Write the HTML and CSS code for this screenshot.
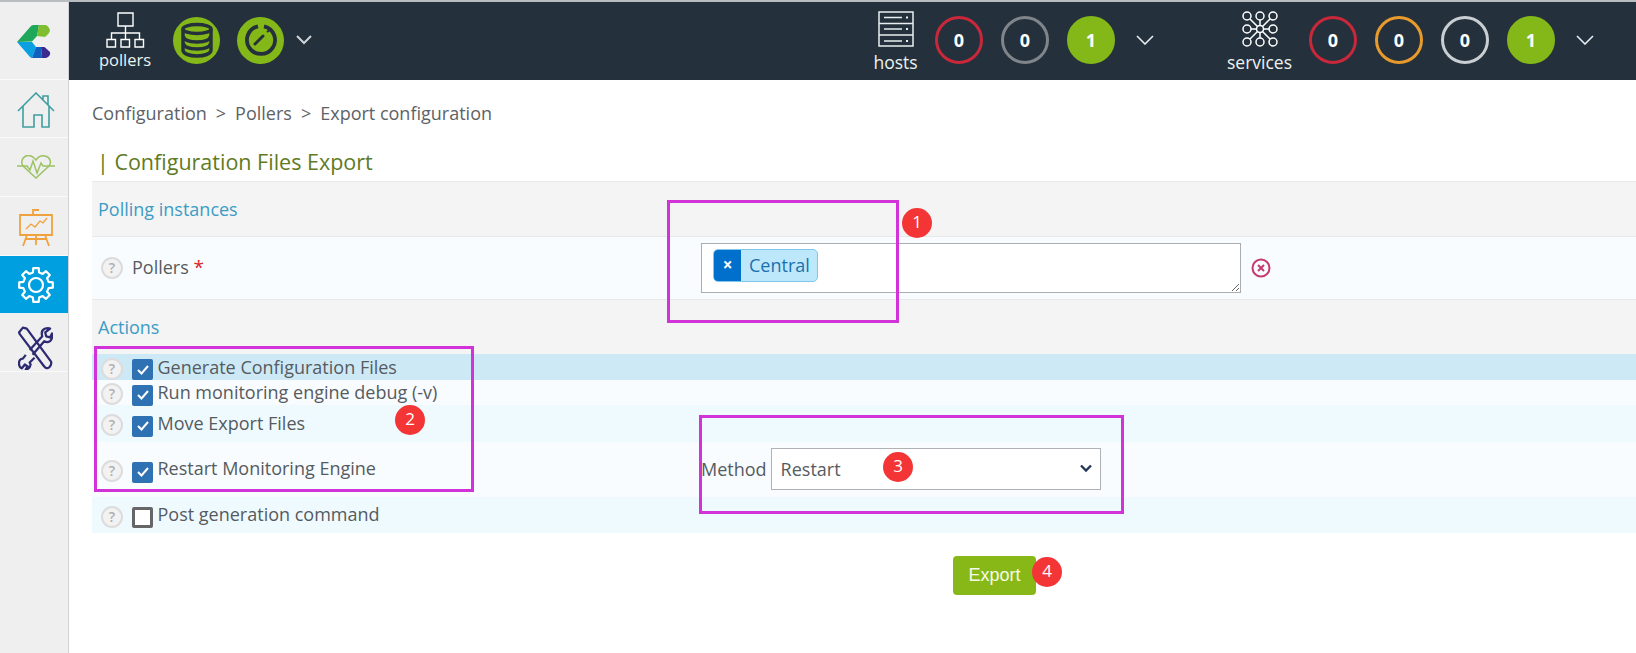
FILE: index.html
```html
<!DOCTYPE html>
<html lang="en">
<head>
<meta charset="utf-8">
<title>Configuration Files Export</title>
<link rel="stylesheet" href="styles.css">
</head>
<body>
<div class="app">
  <nav class="sidebar">
    <div class="side-item side-logo">
      <svg width="34" height="33" viewBox="0 0 34 33">
        <path fill="#1fa85a" d="M0 17 14 1Q15 0 17 0H22L20 11 15 16.5Z"/>
        <path fill="#7fbf2f" d="M22 0H28Q31 0 33 5 33 8 28 12L20 11Z"/>
        <path fill="#0a9fe0" d="M0 17H15L19 22 15 33Q14 33 13 32Z"/>
        <path fill="#1060c0" d="M15 33 19 22H24L25 33Z"/>
        <path fill="#3a2a90" d="M24 22H27.500L33 27Q34 31 29 33H25Z"/>
      </svg>
    </div>
    <div class="side-item side-home">
      <svg width="38" height="36" viewBox="0 0 38 36" fill="none" stroke="#3f9fa0" stroke-width="1.6">
        <path d="M1 19 19 1 37 19M6 14V35H17V23H25V35H32V14M26 8V4H31V13"/>
      </svg>
    </div>
    <div class="side-item side-short">
      <svg width="38" height="24" viewBox="0 0 38 24" fill="none" stroke="#9cc264" stroke-width="1.5">
        <path d="M0 11H10L13 15 16 6 20 18 24 8 26 11H38"/>
        <path d="M6 11C2 4 9-1 14 1 16 2 18 3 19 5 21 2 24 0 28 1 33 2 35 7 32 11L19 23Z"/>
      </svg>
    </div>
    <div class="side-item side-chart">
      <svg width="34" height="38" viewBox="0 0 34 38" fill="none" stroke="#f0a23e" stroke-width="1.8">
        <path d="M1 6H33V26H1ZM14 6V1H20M8 26 4 37M26 26 30 37M17 26V36M6 30H28"/>
        <path stroke-width="1.3" d="M7 20 12 15 16 18 21 12 24 14 28 9"/>
      </svg>
    </div>
    <div class="side-item side-active">
      <svg width="38" height="38" viewBox="-19 -19 38 38" fill="none" stroke="#fff" stroke-width="2.200" stroke-linejoin="round">
        <path d="M12.600-3.100 16.800-2.700V2.700L12.600 3.100 11.100 6.700 13.800 10 10 13.800 6.700 11.100 3.100 12.600 2.700 16.800H-2.700L-3.100 12.600-6.700 11.100-10 13.800-13.800 10-11.100 6.700-12.600 3.100-16.800 2.700V-2.700L-12.600-3.100-11.100-6.700-13.800-10-10-13.800-6.700-11.100-3.100-12.600-2.700-16.800H2.700L3.100-12.600 6.700-11.100 10-13.800 13.800-10 11.100-6.700Z"/>
        <circle r="7"/>
      </svg>
    </div>
    <div class="side-item side-tools">
      <svg width="35" height="44" viewBox="0 0 36 44" fill="none" stroke="#2d2a72" stroke-width="2.300" stroke-linejoin="round">
        <path d="M1 6 5 1 9 2 34 36Q35 39 32 42 29 44 27 41L2 8Z"/>
        <path d="M12 24 25 10Q23 4 28 2 31 1 33 2L28 6 29 10 33 11 35 7Q36 12 33 15 30 17 27 15L15 29M8 29 5 33Q1 33 1 38 1 42 4 43L7 39 10 41 8 44Q12 44 13 39L12 37 17 32"/>
      </svg>
    </div>
  </nav>

  <div class="content">
    <header class="topbar">
      <div class="stat-label stat-pollers">
        <svg width="40" height="36" viewBox="0 0 40 36" fill="none" stroke="#fff" stroke-width="1.4">
          <path d="M13 1H28V14H13ZM20.500 14V28M6.500 27V21H34.500V27M2 27.500H10.500V35H2ZM16 27.500H24.500V35H16ZM30 27.500H38.500V35H30Z"/>
        </svg>
        <span>pollers</span>
      </div>
      <div class="disc disc-db">
        <svg width="46" height="46" viewBox="0 0 46 46" fill="none" stroke="#24303b" stroke-width="3.500">
          <ellipse cx="23" cy="12" rx="14" ry="4.500"/>
          <path d="M9 12V33C9 37 16 39 23 39S37 37 37 33V12M9 19C10 23 16 25 23 25S36 23 37 19M9 26C10 30 16 32 23 32S36 30 37 26"/>
        </svg>
      </div>
      <div class="disc disc-gauge">
        <svg width="46" height="46" viewBox="0 0 46 46" fill="none" stroke="#24303b">
          <path stroke-width="3.800" d="M26 9.300A14 14 0 1 1 20 9.300"/>
          <path stroke-width="3" d="M17 27 25 19" stroke-linecap="round"/>
          <path stroke-width="2" d="M29 15 33 12"/>
        </svg>
      </div>
      <svg class="chev chev-first" width="20" height="10" viewBox="0 0 20 10" fill="none" stroke="#cfd4d8" stroke-width="2"><path d="M3 1 10 8 17 1"/></svg>

      <div class="stat-label stat-hosts">
        <svg width="36" height="36" viewBox="0 0 36 36" fill="none" stroke="#e8eef0" stroke-width="1.500">
          <path d="M1 1H35V35H1ZM1 12.500H35M1 24H35M6 6.500H24M6 18H24M6 30H24"/>
          <path stroke-width="2" d="M29 5.500V7.500M29 17V19M29 29V31"/>
        </svg>
        <span>hosts</span>
      </div>
      <div class="rings">
        <div class="ring ring-red">0</div>
        <div class="ring ring-gray">0</div>
        <div class="ring ring-ok">1</div>
      </div>
      <svg class="chev" width="20" height="10" viewBox="0 0 20 10" fill="none" stroke="#e8eef0" stroke-width="1.600"><path d="M2 1 10 9 18 1"/></svg>

      <div class="stat-label stat-services">
        <svg width="36" height="36" viewBox="0 0 36 36" fill="none" stroke="#fff" stroke-width="1.500">
          <circle cx="5" cy="5" r="4"/><circle cx="18" cy="5" r="4"/><circle cx="31" cy="5" r="4"/>
          <circle cx="5" cy="18" r="4"/><circle cx="18" cy="18" r="3.500"/><circle cx="31" cy="18" r="4"/>
          <circle cx="5" cy="31" r="4"/><circle cx="18" cy="31" r="4"/><circle cx="31" cy="31" r="4"/>
          <path d="M8 8 15.500 15.500M28 8 20.500 15.500M8 28 15.500 20.500M28 28 20.500 20.500M18 9V14.500M18 21.500V27M9 18H14.500M21.500 18H27"/>
        </svg>
        <span>services</span>
      </div>
      <div class="rings">
        <div class="ring ring-red">0</div>
        <div class="ring ring-orange">0</div>
        <div class="ring ring-light">0</div>
        <div class="ring ring-ok">1</div>
      </div>
      <svg class="chev" width="20" height="10" viewBox="0 0 20 10" fill="none" stroke="#e8eef0" stroke-width="1.600"><path d="M2 1 10 9 18 1"/></svg>
    </header>

    <main class="main">
      <div class="crumbs"><span>Configuration</span><span>&gt;</span><span>Pollers</span><span>&gt;</span><span>Export configuration</span></div>
      <h1 class="title">| Configuration Files Export</h1>

      <div class="section section-polling">Polling instances</div>
      <div class="row row-pollers">
        <div class="cell-label">
          <span class="help">?</span>
          <span class="pollers-label">Pollers <em>*</em></span>
        </div>
        <div class="cell-field">
          <div class="multi">
            <span class="tag"><span class="tag-x">×</span><span class="tag-text">Central</span></span>
          </div>
          <svg class="clear" width="20" height="20" viewBox="0 0 20 20" fill="none" stroke="#c43a6c" stroke-width="2"><circle cx="10" cy="10" r="8.500"/><path d="M7 7 13 13M13 7 7 13"/></svg>
        </div>
      </div>
      <div class="section section-actions">Actions</div>

      <div class="row row-generate">
        <div class="cell-label"><span class="help">?</span><span class="check on"><svg width="14" height="12" viewBox="0 0 14 12" fill="none" stroke="#fff" stroke-width="2"><path d="M2 6 5.500 9.500 12 2"/></svg></span><span class="opt">Generate Configuration Files</span></div>
      </div>
      <div class="row row-debug">
        <div class="cell-label"><span class="help">?</span><span class="check on"><svg width="14" height="12" viewBox="0 0 14 12" fill="none" stroke="#fff" stroke-width="2"><path d="M2 6 5.500 9.500 12 2"/></svg></span><span class="opt">Run monitoring engine debug (-v)</span></div>
      </div>
      <div class="row row-move">
        <div class="cell-label"><span class="help">?</span><span class="check on"><svg width="14" height="12" viewBox="0 0 14 12" fill="none" stroke="#fff" stroke-width="2"><path d="M2 6 5.500 9.500 12 2"/></svg></span><span class="opt">Move Export Files</span></div>
      </div>
      <div class="row row-restart">
        <div class="cell-label"><span class="help">?</span><span class="check on"><svg width="14" height="12" viewBox="0 0 14 12" fill="none" stroke="#fff" stroke-width="2"><path d="M2 6 5.500 9.500 12 2"/></svg></span><span class="opt">Restart Monitoring Engine</span></div>
        <div class="cell-field">
          <span class="method-label">Method</span>
          <div class="select"><span>Restart</span><svg width="14" height="9" viewBox="0 0 14 9" fill="none" stroke="#26385a" stroke-width="2.400"><path d="M2 1.500 7 6.500 12 1.500"/></svg></div>
        </div>
      </div>
      <div class="row row-post">
        <div class="cell-label"><span class="help">?</span><span class="check off"></span><span class="opt">Post generation command</span></div>
      </div>

      <div class="actions"><button class="export" type="button">Export</button></div>
    </main>
  </div>
</div>

<div class="mark mark-1"></div>
<div class="mark mark-2"></div>
<div class="mark mark-3"></div>
<div class="num num-1">1</div>
<div class="num num-2">2</div>
<div class="num num-3">3</div>
<div class="num num-4">4</div>
</body>
</html>
```
FILE: styles.css
```css
* { box-sizing: border-box; }
html, body { margin: 0; height: 100%; }
body {
  position: relative;
  height: 653px;
  overflow: hidden;
  background: #fff;
  font-family: "Open Sans", sans-serif;
  font-size: 18px;
  color: #555b60;
  border-top: 2px solid #b9bdbf;
}
.app { display: flex; height: 651px; }

/* Sidebar */
.sidebar {
  width: 69px;
  flex: none;
  background: #efefef;
  border-right: 1px solid #d2d2d2;
}
.side-item {
  height: 58px;
  display: flex;
  align-items: center;
  justify-content: center;
  padding-left: 3px;
  border-bottom: 1px solid #fafafa;
}
.side-logo { height: 78px; padding: 1px 0 0; }
.side-home { padding-top: 2px; }
.side-short { height: 59px; }
.side-chart { height: 59px; padding-top: 4px; }
.side-tools { height: 59px; padding-top: 12px; }
.side-active { background: #009fdf; border-bottom: 0; height: 57px; }

/* Top bar */
.content { flex: 1; min-width: 0; display: flex; flex-direction: column; }
.topbar {
  height: 78px;
  flex: none;
  display: flex;
  align-items: center;
  padding: 0 41px 2px 30px;
  background: #24303b;
}
.stat-label {
  display: flex;
  flex-direction: column;
  align-items: center;
  color: #edf2f2;
  font-size: 17.500px;
  line-height: 20px;
  padding-top: 3px;
}
.stat-label span { margin-top: 5px; white-space: nowrap; }
.stat-pollers { width: 52px; font-size: 16.500px; padding-top: 2px; }
.stat-pollers span { margin-top: 2px; }
.stat-hosts { width: 45px; margin-left: auto; }
.stat-services { width: 65px; margin-left: 72px; }
.disc { width: 47px; height: 47px; border-radius: 50%; background: #84b819; display: flex; align-items: center; justify-content: center; }
.disc-db { margin-left: 22px; }
.disc-gauge { margin-left: 17px; }
.chev { flex: none; margin-left: 20px; }
.chev-first { margin-left: 10px; }
.rings { display: flex; gap: 18px; margin-left: 17px; }
.ring {
  width: 48px;
  height: 48px;
  border-radius: 50%;
  border: 3px solid #c8283a;
  display: flex;
  align-items: center;
  justify-content: center;
  color: #fff;
  font-weight: 700;
  font-size: 18px;
}
.ring-gray { border-color: #80858a; }
.ring-orange { border-color: #e89a2c; }
.ring-light { border-color: #c9ced2; }
.ring-ok { border-color: #84b819; background: #84b819; }

/* Main */
.main { flex: 1; padding-left: 23px; }
.crumbs { display: flex; gap: 9px; height: 57px; align-items: center; padding-top: 9px; font-size: 18px; color: #5d6266; }
.title {
  margin: 0;
  height: 44px;
  padding: 11px 0 0 5px;
  font-size: 21.500px;
  line-height: 28px;
  font-weight: 400;
  color: #5f7a1f;
}
.section {
  display: flex;
  align-items: center;
  padding-left: 6px;
  background: #f4f4f4;
  color: #3b9cc6;
  font-size: 18px;
  border-top: 1px solid #e6e8ea;
}
.section-polling { height: 55px; padding-bottom: 1px; }
.section-actions { height: 55px; }
.row { display: flex; align-items: center; }
.cell-label { width: 609px; flex: none; display: flex; align-items: center; padding-left: 9px; }
.cell-field { display: flex; align-items: center; }
.help {
  width: 22px;
  height: 22px;
  flex: none;
  margin-top: 3px;
  margin-right: 9px;
  border-radius: 50%;
  border: 2px solid #dcdcdc;
  background: #f2f2f2;
  color: #aeaeae;
  font-size: 14px;
  line-height: 18px;
  font-weight: 600;
  text-align: center;
}
.check {
  width: 21px;
  height: 21px;
  flex: none;
  margin-top: 5px;
  margin-right: 4.500px;
  border-radius: 2px;
  display: flex;
  align-items: center;
  justify-content: center;
}
.check.on { background: #2f72b4; }
.check.off { background: #fff; border: 3px solid #666; }
.opt { padding-bottom: 2px; white-space: nowrap; }
.row-generate .opt { padding-bottom: 0; }
.row-restart .opt { padding-bottom: 4px; }
.pollers-label { white-space: nowrap; }
.pollers-label em { font-style: normal; color: #d8232a; font-size: 19px; }

.row-pollers { height: 63px; background: #f8fcfe; border-top: 1px solid #e6e8ea; }
.row-pollers .cell-label { padding-bottom: 3px; }
.row-pollers .help { margin-right: 9px; }
.multi {
  width: 540px;
  height: 50px;
  padding: 5px 11px;
  background: #fff;
  border: 1px solid #a9aeb2;
  resize: both;
  overflow: hidden;
}
.tag {
  display: inline-flex;
  height: 33px;
  border: 1px solid #7fc7ea;
  border-radius: 5px;
  overflow: hidden;
  background: #bde8fc;
  align-items: stretch;
}
.tag-x {
  width: 27px;
  background: #0070cc;
  color: #fff;
  font-weight: 700;
  font-size: 17px;
  line-height: 30px;
  text-align: center;
}
.tag-text { padding: 0 7px 0 8px; line-height: 30px; color: #1b70ae; }
.clear { margin-left: 10px; }

.row-generate { height: 26px; background: #cde9f6; }
.row-debug { height: 25px; background: #f8fcfe; }
.row-move { height: 37px; background: #effafe; }
.row-restart { height: 55px; background: #f8fcfe; }
.row-post { height: 36px; background: #effafe; }
.method-label { margin-right: 4px; padding-bottom: 2px; }
.select {
  width: 330px;
  height: 42px;
  margin-top: -2px;
  display: flex;
  align-items: center;
  justify-content: space-between;
  padding: 0 7px 0 9px;
  background: #fff;
  border: 1px solid #aeb2b6;
}
.actions { padding: 23px 0 0 861px; }
.export {
  width: 83px;
  height: 39px;
  padding: 0;
  border: 0;
  border-radius: 4px;
  background: #88b818;
  color: #f4fae8;
  font-family: "Liberation Sans", sans-serif;
  font-size: 18px;
}

/* Annotations laid over the screenshot */
.mark { position: absolute; border: 3px solid #d233d8; }
.mark-1 { left: 667px; top: 198px; width: 232px; height: 123px; }
.mark-2 { left: 94px; top: 344px; width: 380px; height: 146px; }
.mark-3 { left: 699px; top: 413px; width: 425px; height: 99px; }
.num {
  position: absolute;
  width: 30px;
  height: 30px;
  border-radius: 50%;
  background: #f43535;
  color: #fff;
  font-size: 17px;
  line-height: 28px;
  text-align: center;
}
.num-1 { left: 902px; top: 206px; }
.num-2 { left: 395px; top: 403px; }
.num-3 { left: 883px; top: 450px; }
.num-4 { left: 1032px; top: 555px; }
```
